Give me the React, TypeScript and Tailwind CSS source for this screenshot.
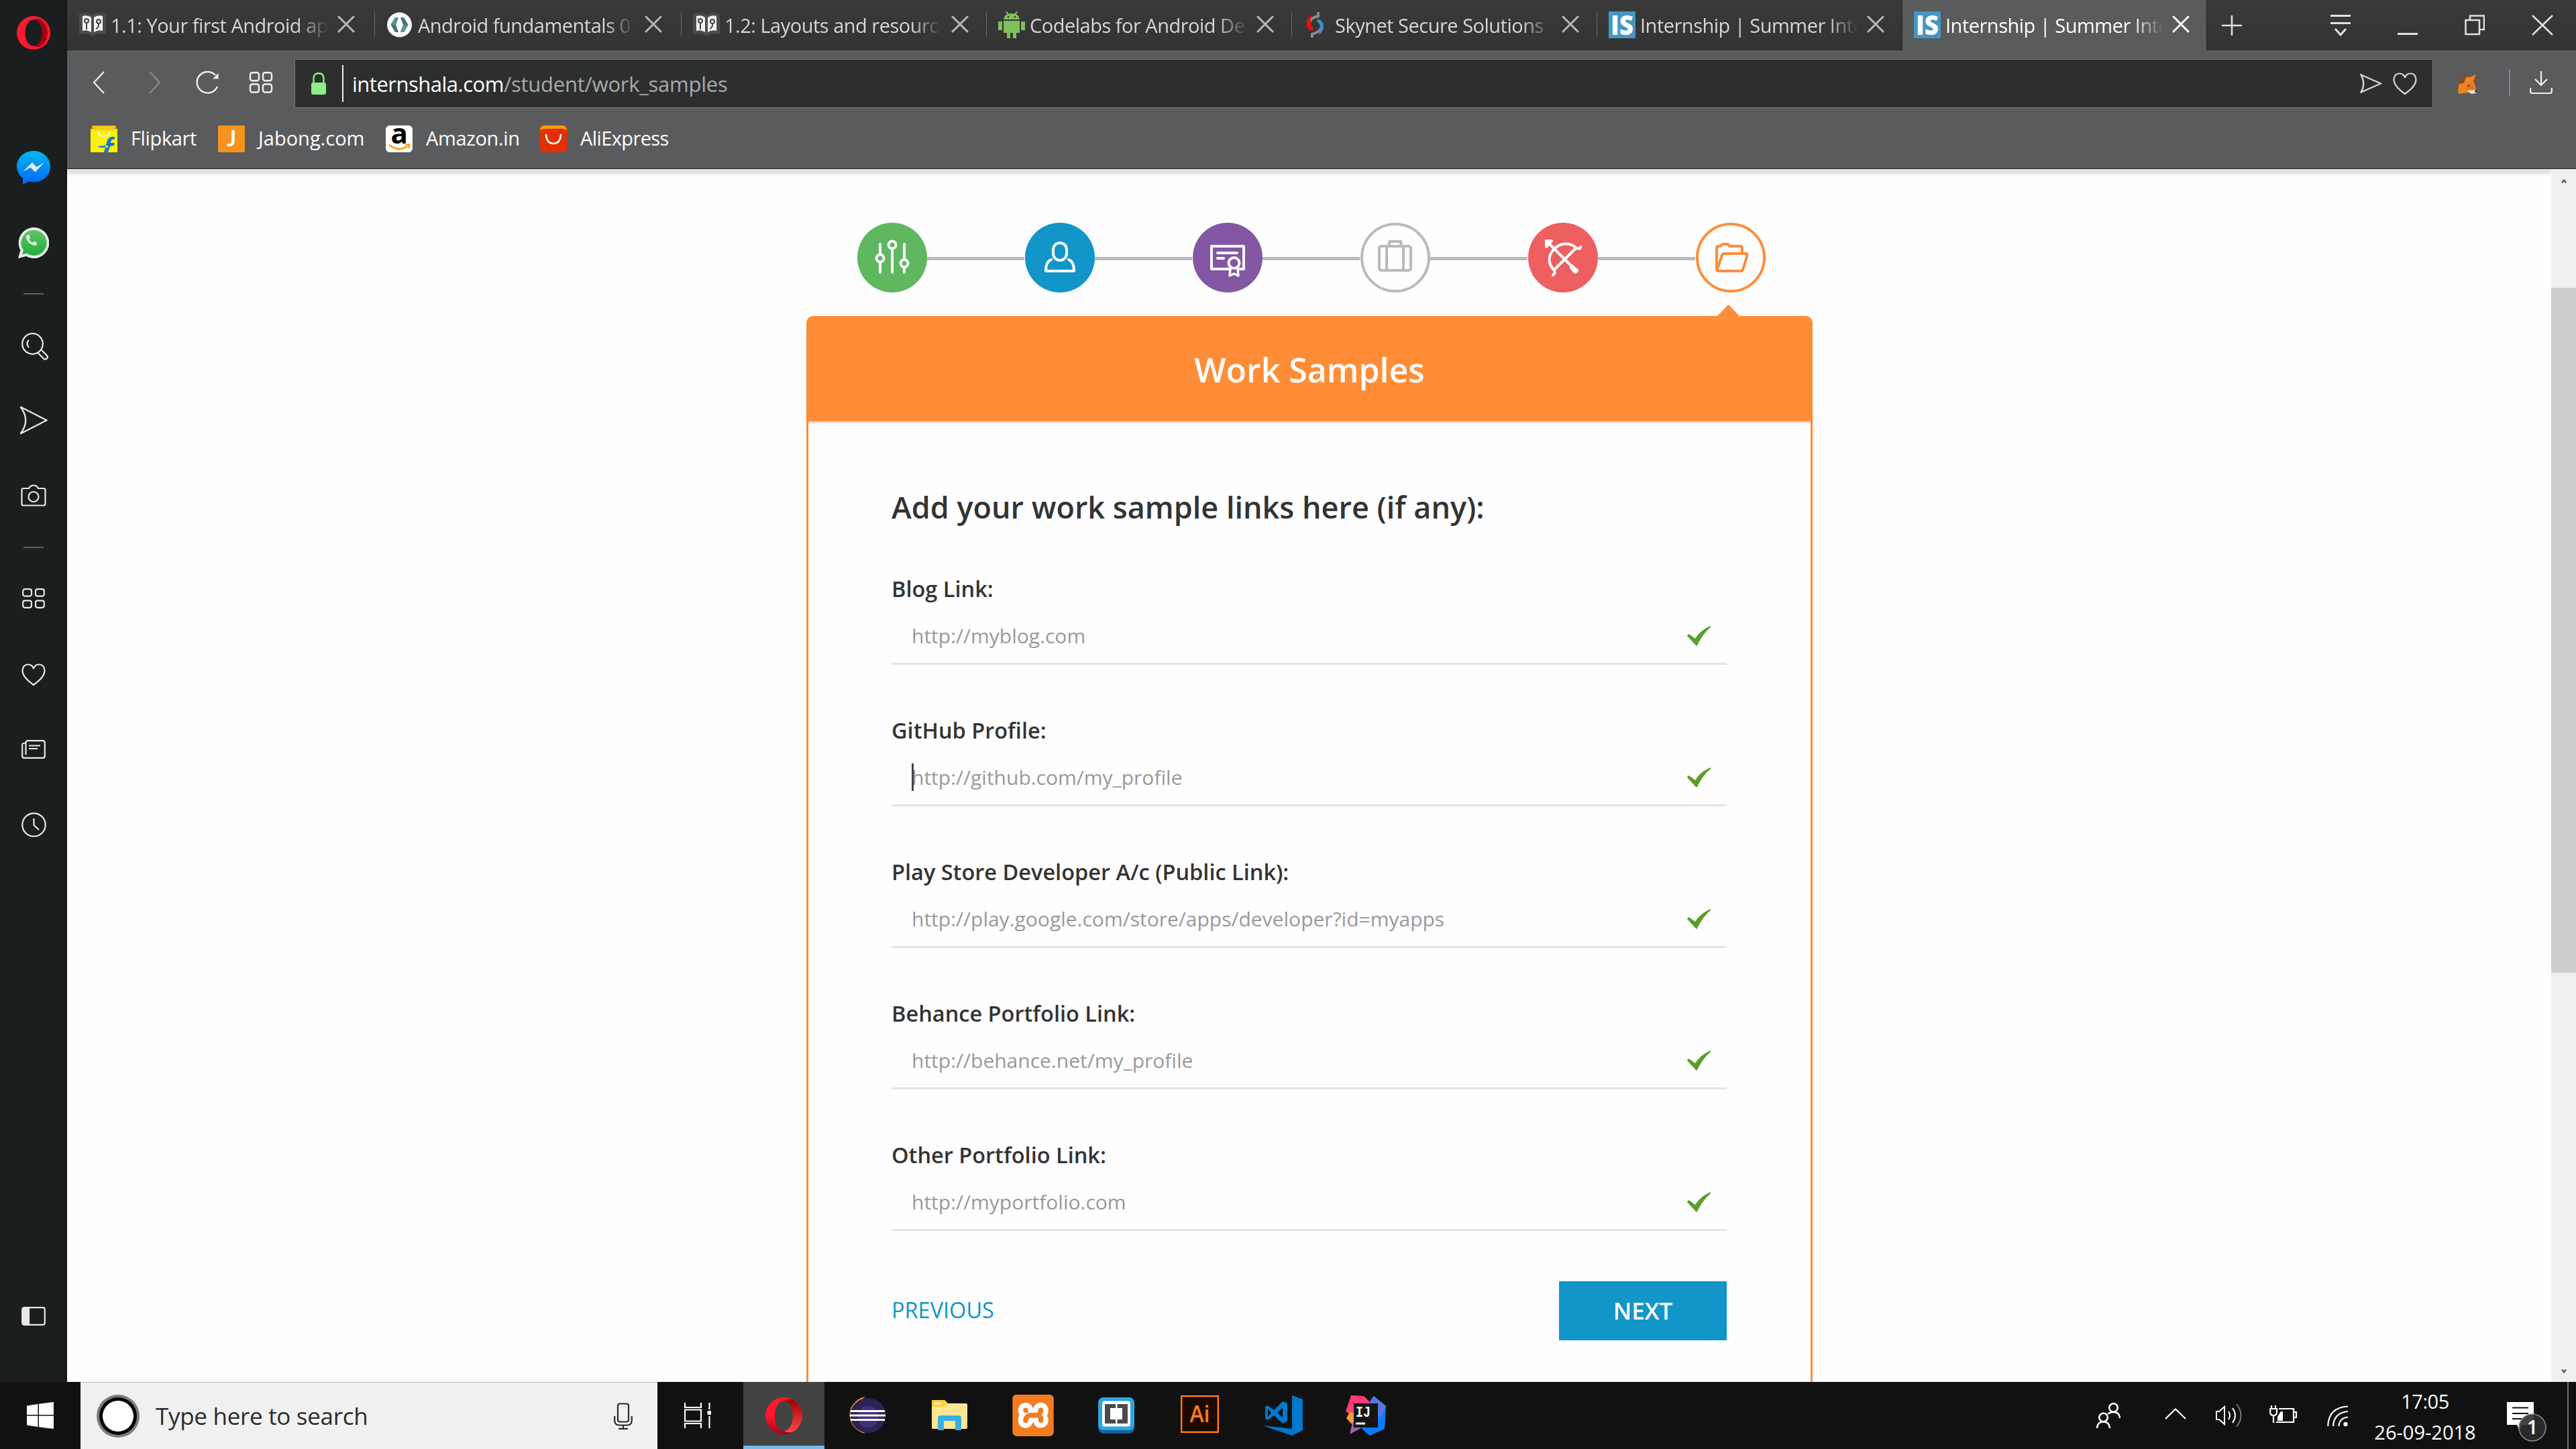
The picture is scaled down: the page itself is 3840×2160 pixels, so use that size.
import React from "react";
import { FaPhoneAlt } from "react-icons/fa";
import { SiXampp } from "react-icons/si";

type IconProps = { className?: string };

const TABS = [
  { title: "1.1: Your first Android ap", icon: "book" },
  { title: "Android fundamentals 0", icon: "codelab" },
  { title: "1.2: Layouts and resourc", icon: "book" },
  { title: "Codelabs for Android De", icon: "android" },
  { title: "Skynet Secure Solutions", icon: "skynet" },
  { title: "Internship | Summer Inte", icon: "is" },
  { title: "Internship | Summer Inte", icon: "is", active: true },
];

const FIELDS = [
  { label: "Blog Link:", hint: "http://myblog.com" },
  { label: "GitHub Profile:", hint: "http://github.com/my_profile", caret: true },
  { label: "Play Store Developer A/c (Public Link):", hint: "http://play.google.com/store/apps/developer?id=myapps" },
  { label: "Behance Portfolio Link:", hint: "http://behance.net/my_profile" },
  { label: "Other Portfolio Link:", hint: "http://myportfolio.com" },
];

function Favicon({ kind }: { kind: string }) {
  const cls = "h-10 w-10 shrink-0";
  if (kind === "book")
    return (
      <svg viewBox="0 0 40 40" className={cls}>
        <path d="M0 4 Q12 0 20 5 Q28 0 40 4 V34 Q28 31 20 37 Q12 31 0 34Z" fill="#4c4c4c" />
        <path d="M5 7 Q13 5 18 9 V31 Q12 27 5 29Z M35 7 Q27 5 22 9 V31 Q28 27 35 29Z" fill="#f4f4f4" />
        <path d="M11 15 V27 M29 17 Q30 24 25 26" stroke="#444" strokeWidth="2" fill="none" />
        <circle cx="11" cy="14" r="3" stroke="#444" strokeWidth="2" fill="#f4f4f4" />
        <circle cx="29" cy="15" r="3" stroke="#444" strokeWidth="2" fill="#f4f4f4" />
      </svg>
    );
  if (kind === "codelab")
    return (
      <svg viewBox="0 0 40 40" className={cls}>
        <circle cx="19.500" cy="20" r="18.500" fill="#fff" />
        <path d="M13 9 H18 L14 20 L18 31 H13 L6.500 20Z M26 9 H21 L25 20 L21 31 H26 L32.500 20Z" fill="#42727f" />
        <path d="M13 9 L6.500 20 H14 L18 9Z M26 31 L32.500 20 H25 L21 31Z" fill="#5c8f9c" />
      </svg>
    );
  if (kind === "android")
    return (
      <svg viewBox="0 0 40 40" className={cls} fill="#7cc159">
        <path d="M8 12 Q9 3 20 3 Q31 3 32 12Z M8 14 H32 V32 H8Z M0 15 H6 V28 H0Z M34 15 H40 V28 H34Z M13 32 H18 V40 H13Z M22 32 H27 V40 H22Z" />
        <path d="M12 0 L15 5 M28 0 L25 5" stroke="#7cc159" strokeWidth="2" />
        <circle cx="15" cy="8" r="1.300" fill="#363636" />
        <circle cx="25" cy="8" r="1.300" fill="#363636" />
      </svg>
    );
  if (kind === "skynet")
    return (
      <svg viewBox="0 0 40 40" className={cls} fill="none">
        <path d="M22 1 V7 Q9 10 9 18 Q9 23 13 27" stroke="#8b8b8b" strokeWidth="4" />
        <path d="M14 4 Q4 11 4.500 19 Q5 24 9 28 L14 29 L12 20 Q8 14 14 4Z" fill="#f5090c" />
        <path d="M13 39 V34 Q26 30 27 23" stroke="#8b8b8b" strokeWidth="4" />
        <path d="M21 11 Q31 15 30 23 Q30 30 22 36 Q27 27 25 22 Q24 17 20 15Z" fill="#3d8bd8" />
      </svg>
    );
  return (
    <svg viewBox="0 0 40 40" className={cls}>
      <rect width="40" height="40" fill="#4596c4" />
      <text x="20" y="34.500" fontSize="40" fontWeight="800" fill="#fff" textAnchor="middle" textLength="34" lengthAdjust="spacingAndGlyphs" fontFamily="Open Sans, sans-serif">IS</text>
    </svg>
  );
}

function CloseX({ className }: IconProps) {
  return (
    <svg viewBox="0 0 26 26" className={className} fill="none" stroke="currentColor" strokeWidth="3" strokeLinecap="round">
      <path d="M2 2 L24 24 M24 2 L2 24" />
    </svg>
  );
}

function TabBar() {
  return (
    <div className="flex h-[75px] bg-linear-to-b from-[#3a3a3a] to-[#333333]">
      {TABS.map((t, i) => (
        <div
          key={i}
          className={
            t.active
              ? "flex h-[75px] w-[455px] items-start border-x border-[#262626] bg-[#5a5b5d] text-white"
              : i === 0
                ? "flex h-[75px] w-[458px] items-start border-b border-[#262626] text-[#d6d6d6]"
                : i === 1
                  ? "flex h-[75px] w-[457px] items-start border-b border-[#262626] text-[#d6d6d6]"
                  : "flex h-[75px] w-[455px] items-start border-b border-[#262626] text-[#d6d6d6]"
          }
        >
          {!t.active && <span className={i > 0 ? "mt-[17px] h-[38px] w-px bg-[#6a6a6a]" : "h-[38px] w-px"} />}
          <div className="mt-[17px] ml-[17px] flex">
            <Favicon kind={t.icon} />
            <div className="ml-[7px] h-[40px] w-[328px] mask-r-from-85% mask-r-to-99% text-[29px] leading-[41px] tracking-[-0.5px] whitespace-nowrap">
              {t.title}
            </div>
            <CloseX className={t.active ? "mt-[6px] ml-[10px] h-[26px] w-[26px] text-white" : "mt-[6px] ml-[10px] h-[26px] w-[26px] text-[#b4babb]"} />
          </div>
        </div>
      ))}
      <div className="flex h-[75px] flex-1 items-start justify-between border-b border-[#262626] pt-[22px] pr-[34px] pl-[22px] text-[#dfe3e3]">
        <svg viewBox="0 0 30 32" className="h-8 w-[30px]" stroke="currentColor" strokeWidth="2.500"><path d="M15 1 V31 M0 16 H30" /></svg>
        <div className="flex gap-[70px]">
          <svg viewBox="0 0 30 32" className="h-8 w-[30px]" fill="none" stroke="currentColor" strokeWidth="3"><path d="M0 1.500 H30 M0 12.500 H30 M7 21 L15 30 L23 21" /></svg>
          <svg viewBox="0 0 30 32" className="h-8 w-[30px]" fill="none" stroke="currentColor" strokeWidth="3"><path d="M0 28.500 H30" /></svg>
          <svg viewBox="0 0 30 32" className="h-8 w-[30px]" fill="none" stroke="currentColor" strokeWidth="2.500"><path d="M8 7 V1.500 H29 V22 H23 M1.500 8 H22 V29 H1.500Z" /></svg>
          <svg viewBox="0 0 32 32" className="h-8 w-8" fill="none" stroke="currentColor" strokeWidth="2.500"><path d="M1 1 L31 30 M31 1 L1 30" /></svg>
        </div>
      </div>
    </div>
  );
}

const HEART = "M18 32 C10 26 1.500 19 1.500 10.500 C1.500 5 5 1.500 9.500 1.500 C13.500 1.500 17 4 18 8 C19 4 22.500 1.500 26.500 1.500 C31 1.500 34.500 5 34.500 10.500 C34.500 19 26 26 18 32Z";

function Fox() {
  return (
    <svg viewBox="0 0 28 30" className="h-[30px] w-7">
      <path d="M10 0 L1 12 L3 17 L12 14 L15 6Z" fill="#8a4a1c" />
      <path d="M27 1 L15 6 L22 14 L26 13Z" fill="#8a4a1c" />
      <path d="M12 5 L18 5 L27 1 L23 11 L26 18 L27 26 L20 29 L15 28 L1 30 L0 24 L2 15 L9 14Z" fill="#f0841f" />
      <path d="M12 16 L22 14 L26 24 L13 24Z" fill="#e2761b" />
      <path d="M14 25 L27 24 L27 29 L20 30Z" fill="#e8dcd2" />
      <circle cx="26.500" cy="26" r="1.500" fill="#222" />
      <circle cx="16" cy="18" r="1.500" fill="#555" />
    </svg>
  );
}

function AddressBar() {
  return (
    <div className="flex h-[99px] items-start bg-[#5a5b5d] pt-[13px] text-[#e6e6e6]">
      <svg viewBox="0 0 18 34" className="mt-[18px] ml-[38px] h-[34px] w-[18px]" fill="none" stroke="#f0f0f0" strokeWidth="2.200"><path d="M17 1 L2 17 L17 33" /></svg>
      <svg viewBox="0 0 18 34" className="mt-[18px] ml-[66px] h-[34px] w-[18px]" fill="none" stroke="#8a8b8d" strokeWidth="2.200"><path d="M1 1 L16 17 L1 33" /></svg>
      <svg viewBox="0 0 34 34" className="mt-[18px] ml-[52px] h-[34px] w-[34px]" fill="none" stroke="#f0f0f0" strokeWidth="2.400">
        <path d="M32 23 A15.800 15.800 0 1 1 29 6" />
        <path d="M33.500 3 V11.500 H25Z" fill="#f0f0f0" stroke="none" />
      </svg>
      <svg viewBox="0 0 36 32" className="mt-[19px] ml-[45px] h-8 w-9" fill="none" stroke="#f0f0f0" strokeWidth="2.400">
        <rect x="2" y="1.200" width="13" height="12" rx="3" /><rect x="21" y="1.200" width="13" height="12" rx="3" />
        <rect x="2" y="18.500" width="13" height="12" rx="3" /><rect x="21" y="18.500" width="13" height="12" rx="3" />
      </svg>
      <div className="ml-[32px] flex h-[73px] w-[3188px] items-center border border-[#77787b] bg-[#2d2f2e]">
        <svg viewBox="0 0 22 33" className="ml-6 h-[33px] w-[22px]"><path d="M3.500 16 V9 Q3.500 1.300 11 1.300 Q18.500 1.300 18.500 9 V16" fill="none" stroke="#8cee88" strokeWidth="2.400" /><rect y="15" width="22" height="18" rx="3" fill="#8cee88" /></svg>
        <span className="ml-6 h-[55px] w-[2px] bg-[#f0f0f0]" />
        <span className="ml-[13px] text-[31px] leading-[44px] tracking-[-0.5px] whitespace-nowrap text-white">internshala.com</span>
        <span className="text-[31px] leading-[44px] tracking-[-0.25px] whitespace-nowrap text-[#a9aaaa]">/student/work_samples</span>
        <svg viewBox="0 0 33 29" className="mr-[16px] ml-auto h-[29px] w-[33px]" fill="none" stroke="#d8dada" strokeWidth="2.200"><path d="M1.500 1.500 L31 14.500 L1.500 27.500 Q9 14.500 1.500 1.500Z" /></svg>
        <svg viewBox="0 0 36 33" className="mr-[23px] h-[33px] w-9" fill="none" stroke="#d8dada" strokeWidth="2.200"><path d={HEART} /></svg>
      </div>
      <div className="mt-[22px] ml-[37px]"><Fox /></div>
      <span className="mt-[16px] ml-[48px] h-10 w-[2px] bg-[#85868a]" />
      <svg viewBox="0 0 34 34" className="mt-[18px] ml-[29px] h-[34px] w-[34px]" fill="none" stroke="#f0f0f0" strokeWidth="2.200"><path d="M17 0 V21 M8 12 L17 21 L26 12 M1.200 25 V30 Q1.200 33 4 33 H30 Q32.800 33 32.800 30 V25" /></svg>
    </div>
  );
}

function Bookmarks() {
  return (
    <div className="flex h-[77px] items-start bg-[#5a5b5d] pt-[13px] pl-[35px] text-[29px] leading-[37px] tracking-[-0.35px] text-white">
      <div className="flex w-[190px]">
        <svg viewBox="0 0 40 40" className="mr-5 h-10 w-10">
          <path d="M2 0 H38 V4 H2Z" fill="#d9a400" /><path d="M0 5 H40 V40 H0Z" fill="#fff200" />
          <path d="M3 1 H37 V7 H3Z" fill="#f7c81b" />
          <path d="M11 9 Q12 16 20 16 Q28 16 29 9" fill="none" stroke="#fff" strokeWidth="2" />
          <path d="M36 17 Q26 15 24 26 L20 40 H26 L29 31 L35 30 L36 26 H30 Q30 20 36 21Z M9 31 L26 30 V33 H15Z" fill="#0a78d8" />
        </svg>
        <span>Flipkart</span>
      </div>
      <div className="flex w-[250px]">
        <svg viewBox="0 0 40 40" className="mr-5 h-10 w-10"><rect width="40" height="40" rx="2" fill="#f7931e" /><text x="20" y="31" fontSize="33" fontWeight="700" fill="#fff" textAnchor="middle" fontFamily="Lato, sans-serif">J</text></svg>
        <span className="tracking-normal">Jabong.com</span>
      </div>
      <div className="flex w-[230px]">
        <svg viewBox="0 0 40 40" className="mr-5 h-10 w-10"><rect width="40" height="40" rx="6" fill="#fff" /><text x="20" y="27" fontSize="42" fontWeight="700" fill="#000" textAnchor="middle" fontFamily="Open Sans, sans-serif">a</text><path d="M5 29 Q19 40 32 31 M30 29 L35 28.500 L34 34" fill="none" stroke="#ff9900" strokeWidth="2.600" /></svg>
        <span>Amazon.in</span>
      </div>
      <div className="flex">
        <svg viewBox="0 0 40 40" className="mr-5 h-10 w-10"><rect width="40" height="40" rx="6" fill="#e62e04" /><path d="M0 8 Q0 0 7 0 H33 Q40 0 40 8 Q38 5 33 5 H7 Q2 5 0 8Z" fill="#ff9a00" /><path d="M9 14 Q10 27 20 27 Q30 27 31 14" fill="none" stroke="#fff" strokeWidth="2.600" strokeLinecap="round" /></svg>
        <span className="tracking-[-0.6px]">AliExpress</span>
      </div>
    </div>
  );
}

function Sidebar() {
  const line = { fill: "none", stroke: "#e8e8e8", strokeWidth: 2.2 };
  return (
    <aside className="flex h-[2060px] w-[100px] shrink-0 flex-col items-center border-r-[3px] border-[#15181a] bg-[#1a1e1f]">
      <svg viewBox="0 0 50 50" className="mt-6 ml-[3px] h-[50px] w-[50px]">
        <path fillRule="evenodd" d="M25 0 A25 25 0 0 0 25 50 A25 25 0 0 0 25 0Z M25 5.500 C32 5.500 38 13 38 25 C38 37 32 44.500 25 44.500 C18 44.500 12.500 37 12.500 25 C12.500 13 18 5.500 25 5.500Z" fill="#ff1b2d" />
        <path d="M25 5.500 Q30 3 36 5 A25 25 0 0 1 36 45 Q30 47 25 44.500 C32 44.500 38 37 38 25 C38 13 32 5.500 25 5.500Z" fill="#a70014" />
      </svg>
      <svg viewBox="0 0 50 50" className="mt-[151px] ml-[3px] h-[50px] w-[50px]">
        <defs><linearGradient id="msg" x1="0" y1="0" x2="0" y2="1"><stop offset="0" stopColor="#00b8f0" /><stop offset="1" stopColor="#0064ff" /></linearGradient></defs>
        <path d="M25 0 C11 0 0 10 0 23.500 C0 30 3 36 9 40.500 V50 L18 45.500 Q21 46.500 25 46.500 C39 46.500 50 36.500 50 23.500 C50 10 39 0 25 0Z" fill="url(#msg)" />
        <path d="M9 31 L23 17 L29.500 24 L41 17 L27.500 31.500 L20.500 24.500Z" fill="#ececec" />
      </svg>
      <svg viewBox="0 0 46 46" className="mt-16 ml-[3px] h-[46px] w-[46px]">
        <defs><linearGradient id="wa" x1="0" y1="0" x2="0" y2="1"><stop offset="0" stopColor="#5fc765" /><stop offset="1" stopColor="#1fae3a" /></linearGradient></defs>
        <path d="M23 0 A23 23 0 1 1 12 43 L0 46 L3.500 34 A23 23 0 0 1 23 0Z" fill="#ececec" />
        <path d="M23 4 A19 19 0 1 1 13 38.800 L6 40.500 L8 34 A19 19 0 0 1 23 4Z" fill="url(#wa)" />
        <FaPhoneAlt x="12" y="11" width="22" height="22" color="#ececec" />
      </svg>
      <span className="mt-[52px] ml-[3px] h-[2px] w-[30px] bg-[#5c6060]" />
      <svg viewBox="0 0 40 41" className="mt-[57px] ml-[7px] h-[41px] w-10" {...line}>
        <circle cx="16.500" cy="16.500" r="15.300" /><path d="M11 11 Q6 16 11 22 M24 29.500 L34 39.500 Q39 40 39 35 L29.500 25.500" />
      </svg>
      <svg viewBox="0 0 42 43" className="mt-[68px] ml-[3px] h-[43px] w-[42px]" {...line}><path d="M1.500 1.500 L40.500 21.500 L1.500 41.500 Q17 21.500 1.500 1.500Z" /></svg>
      <svg viewBox="0 0 38 33" className="mt-[74px] ml-[3px] h-[33px] w-[38px]" {...line}><path d="M4 6 H12 Q14 1.500 19 1.500 Q24 1.500 26 6 H34 Q36.500 6 36.500 8.500 V29 Q36.500 31.500 34 31.500 H4 Q1.500 31.500 1.500 29 V8.500 Q1.500 6 4 6Z" /><circle cx="19" cy="18.500" r="7.500" /></svg>
      <span className="mt-[60px] ml-[3px] h-[2px] w-[30px] bg-[#5c6060]" />
      <svg viewBox="0 0 34 30" className="mt-[60px] ml-[3px] h-[30px] w-[34px]" {...line}>
        <rect x="1.200" y="1.200" width="12.800" height="10.500" rx="3" /><rect x="20" y="1.200" width="12.800" height="10.500" rx="3" />
        <rect x="1.200" y="18.300" width="12.800" height="10.500" rx="3" /><rect x="20" y="18.300" width="12.800" height="10.500" rx="3" />
      </svg>
      <svg viewBox="0 0 36 33" className="mt-[82px] ml-[3px] h-[33px] w-9" {...line}><path d={HEART} /></svg>
      <svg viewBox="0 0 36 28" className="mt-[81px] ml-[3px] h-7 w-9" {...line}><path d="M6.500 22 V4 Q6.500 1.200 9.500 1.200 H31.500 Q34.800 1.200 34.800 4 V24 Q34.800 26.800 32 26.800 H4 Q1.200 26.800 1.200 24 V7 Q1.200 4.500 6.500 4.500 M11 8.500 H28 M11 13 H24" /></svg>
      <svg viewBox="0 0 37 37" className="mt-20 ml-[3px] h-[37px] w-[37px]" {...line}><circle cx="18.500" cy="18.500" r="17.200" /><path d="M18.500 9 V19 L26 26" /></svg>
      <svg viewBox="0 0 36 28" className="mt-auto mb-[84px] ml-[3px] h-7 w-9" {...line}><rect x="1.200" y="1.200" width="33.600" height="25.600" rx="3" /><path d="M2 2 H11 V26 H2Z" fill="#e8e8e8" /></svg>
    </aside>
  );
}

const W = { fill: "none", stroke: "#fff", strokeWidth: 4, strokeLinecap: "round" as const, strokeLinejoin: "round" as const };

function Stepper() {
  const link = <span className="mt-[51px] mr-px h-[5px] w-[145px] bg-[#bababa]" />;
  const c = "h-[104px] w-[104px]";
  return (
    <div className="mt-[77px] ml-[76px] flex">
      <svg viewBox="0 0 104 104" className={c} {...W}>
        <circle cx="52" cy="52" r="52" fill="#5fb760" stroke="none" />
        <path d="M34 32 V47 M34 60 V74 M52 40 V74 M70 32 V54 M70 67 V74" />
        <circle cx="34" cy="53" r="5.500" /><circle cx="52" cy="33" r="5.500" /><circle cx="70" cy="60.500" r="5.500" />
      </svg>
      {link}
      <svg viewBox="0 0 104 104" className={c} {...W}>
        <circle cx="52" cy="52" r="52" fill="#1295c9" stroke="none" />
        <rect x="42" y="30" width="20" height="26" rx="10" />
        <path d="M39 55 Q31 58 31 72 H73 Q73 58 65 55" />
      </svg>
      {link}
      <svg viewBox="0 0 104 104" className={c} {...W}>
        <circle cx="52" cy="52" r="52" fill="#8357a4" stroke="none" />
        <path d="M53 69 H28 V35 H76 V69 H70 M37 45 H66 M37 53 H46" />
        <circle cx="61.500" cy="60" r="8" fill="#8357a4" />
        <path d="M56 69 L55 79 L61.500 76 L68 79 L67 69" strokeWidth="3.500" />
      </svg>
      {link}
      <svg viewBox="0 0 104 104" className={c} {...W} stroke="#bababa">
        <circle cx="52" cy="52" r="50" />
        <rect x="28" y="35" width="47" height="36" rx="3" /><path d="M39 35 V71 M64 35 V71 M43 34 V28 H60.500 V34" />
      </svg>
      {link}
      <svg viewBox="0 0 104 104" className={c} {...W}>
        <circle cx="52" cy="52" r="52" fill="#ee5f60" stroke="none" />
        <path d="M78 36 Q77 41 71 37 C60 28 46 31 38 40 C29 50 30 61 38 70 Q42 74 37 78 M71 38 L39 70 M30 30 L66 66" />
        <path d="M27 27 H35 L27 36Z" fill="#fff" />
        <path d="M65 64 L73 71 L72 73 L70 74 L64 67Z" />
      </svg>
      {link}
      <svg viewBox="0 0 104 104" className={c} {...W} stroke="#ff8d37">
        <circle cx="52" cy="52" r="50" />
        <path d="M31 70 V38 Q31 35 34 35 H37 L39 32 H48 L50 35 H66 Q69 35 69 38 V45" />
        <path d="M43 46 H74 Q77 46 76.500 49 L70 70 Q69 72 67 72 H34 Q31 72 32 69 L39 48.500 Q40 46 43 46Z" />
      </svg>
    </div>
  );
}

function Check() {
  return (
    <svg viewBox="0 0 35 30" className="h-[30px] w-[35px]">
      <path d="M0 15 Q1 11 4 13 L12 19 Q20 6 35 0 V2 Q24 11 15 29 Q14 31 12 28 Z" fill="#5b9f2a" />
    </svg>
  );
}

function FormCard() {
  return (
    <div className="relative mt-[35px] h-[1700px] w-[1500px] rounded-t-[10px] border-[3px] border-[#ff8d37] bg-[#fefefe]">
      <span className="absolute -top-[20px] left-[1354px] h-[18px] w-[35px] bg-[#ff8d37] [clip-path:polygon(50%_0,100%_100%,0_100%)]" />
      <div className="flex h-[157px] items-center justify-center border-b-[3px] border-[#dcdcdc] bg-[#ff8d37] text-[50px] font-semibold text-white">
        Work Samples
      </div>
      <div className="pr-[125px] pl-[124px]">
        <h2 className="mt-[95px] text-[45px] leading-[60px] font-semibold text-[#333]">Add your work sample links here (if any):</h2>
        <div className="mt-[68px] flex flex-col gap-[74px]">
          {FIELDS.map((f) => (
            <div key={f.label} className="h-[137px]">
              <div className="h-[46px] text-[32.5px] leading-[48px] font-semibold text-[#333]">{f.label}</div>
              <div className="relative flex h-[91px] items-center justify-between border-b-[3px] border-[#e4e4e4] pt-2 pr-[24px] pl-[30px] text-[30px] text-[#999]">
                {f.caret && <span className="absolute top-[27px] left-[30px] h-[41px] w-[3px] bg-[#444]" />}
                <span className="mb-[2px]">{f.hint}</span>
                <Check />
              </div>
            </div>
          ))}
        </div>
        <div className="mt-[75px] flex h-[88px] items-center justify-between">
          <span className="pb-[2px] text-[32.5px] text-[#1295c9]">PREVIOUS</span>
          <button className="flex h-[88px] w-[250px] items-center justify-center bg-[#1295c9] text-[35px] font-semibold text-white">NEXT</button>
        </div>
      </div>
    </div>
  );
}

function Taskbar() {
  return (
    <div className="flex h-[100px] bg-[#111111] text-white">
      <div className="flex w-[120px] items-center justify-center">
        <svg viewBox="0 0 40 40" className="h-10 w-10" fill="#fff"><path d="M0 5.500 L16.500 3 V19 H0Z M18 2.800 L40 0 V19 H18Z M0 20.500 H16.500 V37 L0 34.500Z M18 20.500 H40 V40 L18 37.200Z" /></svg>
      </div>
      <div className="flex w-[860px] items-center border-t border-[#b9b9b9] bg-[#f1f1f1] pl-6">
        <svg viewBox="0 0 64 64" className="h-16 w-16"><circle cx="32" cy="32" r="32" fill="#7c7c7c" /><circle cx="32" cy="32" r="28" fill="#000" /><circle cx="32" cy="32" r="23" fill="#fff" /></svg>
        <span className="ml-[24px] pt-[2px] text-[35px] tracking-[-0.3px] whitespace-nowrap text-[#2b2b2b]">Type here to search</span>
        <svg viewBox="0 0 28 40" className="mr-[37px] ml-auto h-10 w-7" fill="none" stroke="#2b2b2b" strokeWidth="2.200"><rect x="6" y="1.500" width="16" height="27" rx="3" /><path d="M1.200 20 V26 Q1.200 33.500 8 33.500 H20 Q26.800 33.500 26.800 26 V20 M14 34 V38.500 M7 38.800 H21" /></svg>
      </div>
      <div className="flex w-[128px] items-center pl-10">
        <svg viewBox="0 0 40 40" className="h-10 w-10" fill="none" stroke="#fff" strokeWidth="2.200"><path d="M1 1 V8 H25 V1 M1 11.500 H25 V28.500 H1Z M1 39 V32 H25 V39 M37.500 1 V11 M37.500 21 V39" /><circle cx="37.500" cy="16" r="3.200" fill="#fff" stroke="none" /></svg>
      </div>
      <div className="flex w-[121px] justify-center border-b-[5px] border-[#76b9ed] bg-[#424242] pt-[23px]">
        <svg viewBox="0 0 55 55" className="h-[55px] w-[55px]">
          <defs><linearGradient id="op1" x1="0" y1="0" x2="0" y2="1"><stop offset="0" stopColor="#ff1b2d" /><stop offset=".5" stopColor="#fa1a2c" /><stop offset="1" stopColor="#a70014" /></linearGradient><linearGradient id="op2" x1="0" y1="0" x2="0" y2="1"><stop offset="0" stopColor="#9c0000" /><stop offset="1" stopColor="#ff4b4b" /></linearGradient></defs>
          <path fillRule="evenodd" d="M27.500 0 A27.500 27.500 0 0 0 27.500 55 A27.500 27.500 0 0 0 27.500 0Z M27.500 5 C35 5 41 15 41 27.500 C41 40 35 50 27.500 50 C20 50 14 40 14 27.500 C14 15 20 5 27.500 5Z" fill="url(#op1)" />
          <path d="M27.500 5 Q36 1 42 4.200 A27.500 27.500 0 0 1 42 50.800 Q36 54 27.500 50 C35 50 41 40 41 27.500 C41 15 35 5 27.500 5Z" fill="url(#op2)" />
        </svg>
      </div>
      <div className="flex pt-5 pl-[32px]">
        <svg viewBox="0 0 60 60" className="mr-[68px] h-[60px] w-[60px]">
          <path d="M29 2 A29 28 0 0 0 29 57 A34 34 0 0 1 29 2Z" fill="#f7941e" />
          <ellipse cx="33" cy="30" rx="26.500" ry="26" fill="#2c2255" />
          <circle cx="33" cy="32" r="16" fill="#42307d" />
          <path d="M7 22 H58 V25 H7Z M6 28.500 H59 V31.500 H6Z M7 35 H58 V38 H7Z" fill="#fff" />
        </svg>
        <svg viewBox="0 0 54 60" className="mr-[67px] h-[60px] w-[54px]">
          <path d="M0 9 Q0 7 2 7 H19 L24 12 H51 Q53 12 53 14 V48 Q53 50 51 50 H2 Q0 50 0 48Z" fill="#ffe693" />
          <path d="M0 9 Q0 7 2 7 H19 L24 12 L19 17 H0Z" fill="#ffd039" /><path d="M4 11 H14 V13.500 H4Z" fill="#fff" />
          <path d="M9 52 V34 Q9 30 13 30 H40 Q44 30 44 34 V52 H35 V38 H18 V52Z" fill="#37b0e6" />
        </svg>
        <div className="relative mr-[67px] h-[60px] w-[60px] rounded-[6px] bg-white"><SiXampp className="absolute -top-px -left-px h-[62px] w-[62px] text-[#f57b20]" /></div>
        <svg viewBox="0 0 54 60" className="mr-[69px] h-[60px] w-[54px]">
          <rect y="6" width="54" height="51" rx="8" fill="#15619f" /><rect y="3" width="54" height="49" rx="8" fill="#2ba6df" />
          <rect x="6" y="8.500" width="42" height="38" rx="4" fill="#fff" />
          <path d="M10 13 H26 V24 H20 V32 H26 V42 H10Z M44 13 H28.500 V24 H34 V32 H28.500 V42 H44Z" fill="#4a4a4a" />
          <rect x="18" y="19" width="18" height="17" fill="#fff" />
        </svg>
        <svg viewBox="0 0 57 60" className="mr-[65px] h-[60px] w-[57px]">
          <rect x="1.200" y="1.200" width="54.600" height="53.600" fill="#1c0a00" stroke="#ff7c1a" strokeWidth="2.400" />
          <text x="28.500" y="39.500" fontSize="35" fill="#ff7c1a" textAnchor="middle" fontFamily="Open Sans, sans-serif" fontWeight="600" textLength="30" lengthAdjust="spacingAndGlyphs">Ai</text>
        </svg>
        <svg viewBox="0 0 60 60" className="mr-[64px] h-[60px] w-[60px]" fill="#0078cf">
          <path d="M44 0 L60 6 V52 L44 60 L0 45 L44 50Z" />
          <path fillRule="evenodd" d="M30 9 L37 12 V38 L30 42 L17 30 L8 37 L4 35 V17 L8 15 L17 22Z M30 18 L22 26 L30 33Z M8 20 V32 L13 26Z" />
        </svg>
        <svg viewBox="0 0 60 60" className="h-[60px] w-[60px]">
          <path d="M8 0 L27 1 L40 14 L24 40 L0 24Z" fill="#fe3b72" />
          <path d="M42 1 L60 16 L58 50 L36 60 L24 50 L34 12Z" fill="#087cfa" /><path d="M42 1 L60 16 L52 34 L34 12Z" fill="#5478e0" />
          <path d="M6 25 L14 26 V42 L8 42 L1 34Z" fill="#f99a3b" /><path d="M10 40 L28 46 L6 58 Z" fill="#a55fa6" />
          <rect x="12" y="12" width="36" height="36" fill="#151515" />
          <text x="15" y="32" fontSize="22" fontWeight="700" fill="#fff" fontFamily="Liberation Mono, monospace" textLength="22" lengthAdjust="spacingAndGlyphs">IJ</text>
          <path d="M15 40.500 H29 V43.500 H15Z" fill="#fff" />
        </svg>
      </div>
      <div className="ml-auto flex items-start">
        <svg viewBox="0 0 36 38" className="mt-[31px] h-[38px] w-9" fill="none" stroke="#fff" strokeWidth="2.500"><circle cx="25.500" cy="7.500" r="6.300" /><circle cx="10.500" cy="22" r="6.300" /><path d="M1 38 Q1.500 28.500 10.500 28.500 Q19.500 28.500 20 38 M17 17 Q20 14 25.500 14 Q34.500 14 35 23" /></svg>
        <svg viewBox="0 0 32 17" className="mt-[39px] ml-[66px] h-[17px] w-8" fill="none" stroke="#fff" strokeWidth="2.200"><path d="M1 16 L16 1.500 L31 16" /></svg>
        <svg viewBox="0 0 40 36" className="mt-[32px] ml-[44px] h-9 w-10" fill="none" stroke="#fff" strokeWidth="2"><path d="M1 12 H5 L13 5 V31 L5 24 H1Z M19 12 Q23 18 19 24 M25 7 Q33 18 25 29" /><path d="M31 1 Q44 18 31 35" stroke="#777" /></svg>
        <svg viewBox="0 0 42 28" className="mt-[34px] ml-[40px] h-7 w-[42px]" fill="none" stroke="#fff" strokeWidth="2.200"><path d="M14 6 H36 V26 H10 M37 11 H40 V19 H37 M3 1 V6 M9 1 V6 M1.200 6 H11 V11 Q11 16 6 16 Q1.200 16 1.200 11Z M6 16 V27" /><path d="M12 24 V18 L17 10 H20 V24Z" fill="#fff" stroke="none" /></svg>
        <svg viewBox="0 0 32 32" className="mt-[35px] ml-[44px] h-8 w-8" fill="none" stroke="#fff" strokeWidth="2.200"><path d="M1.200 31 Q2 3 31 1.500 M9 31 Q10 11 31 9 M17.500 31 Q18 19 31 17.500" /><circle cx="27.500" cy="28" r="3.200" fill="#fff" stroke="none" /></svg>
        <div className="ml-[35px] flex w-[158px] flex-col items-center pt-[6px] text-[29px] leading-[46px]">
          <span className="tracking-[-0.5px]">17:05</span>
          <span>26-09-2018</span>
        </div>
        <svg viewBox="0 0 60 60" className="mt-[30px] ml-[43px] h-[60px] w-[60px]">
          <path d="M0 0 H40 V34 H24 L18 41 L15 34 H0Z" fill="#fff" /><path d="M8 8.500 H32 M8 17 H32 M8 25 H24" stroke="#111" strokeWidth="2.200" />
          <circle cx="38" cy="38" r="20" fill="#2d2d2d" fillOpacity=".9" stroke="#8a8a8a" strokeWidth="1.500" />
          <text x="38" y="48" fontSize="29" fill="#fff" textAnchor="middle" fontWeight="600" fontFamily="Open Sans, sans-serif">1</text>
        </svg>
        <span className="ml-[30px] h-[100px] w-[2px] bg-[#6e6e6e]" />
        <span className="w-[11px]" />
      </div>
    </div>
  );
}

export default function App() {
  return (
    <div className="flex h-[2160px] w-[3840px] flex-col overflow-hidden bg-white font-['Open_Sans',sans-serif]">
      <div className="flex h-[2060px]">
        <Sidebar />
        <div className="flex min-w-0 flex-1 flex-col">
          <TabBar />
          <AddressBar />
          <Bookmarks />
          <div className="flex h-[1809px] overflow-hidden border-t border-[#262626] bg-[#fefefe]">
            <main className="flex-1 overflow-hidden">
              <div className="h-[3px] bg-[#e3e3e3] shadow-[0_2px_6px_rgba(0,0,0,0.35)]" />
              <div className="ml-[1102px] w-[1500px]">
                <Stepper />
                <FormCard />
              </div>
            </main>
            <div className="flex h-[1808px] w-[37px] flex-col items-center bg-[#f0f0f0]">
              <svg viewBox="0 0 8 6" className="mt-[15px] h-[6px] w-2" fill="none" stroke="#606060" strokeWidth="2.500"><path d="M1 5.500 L4 1.500 L7 5.500" /></svg>
              <span className="mt-[156px] h-[1021px] w-full bg-[#cdcdcd]" />
              <svg viewBox="0 0 8 6" className="mt-auto mb-[13px] h-[6px] w-2" fill="none" stroke="#606060" strokeWidth="2.500"><path d="M1 .5 L4 4.500 L7 .5" /></svg>
            </div>
          </div>
        </div>
      </div>
      <Taskbar />
    </div>
  );
}
